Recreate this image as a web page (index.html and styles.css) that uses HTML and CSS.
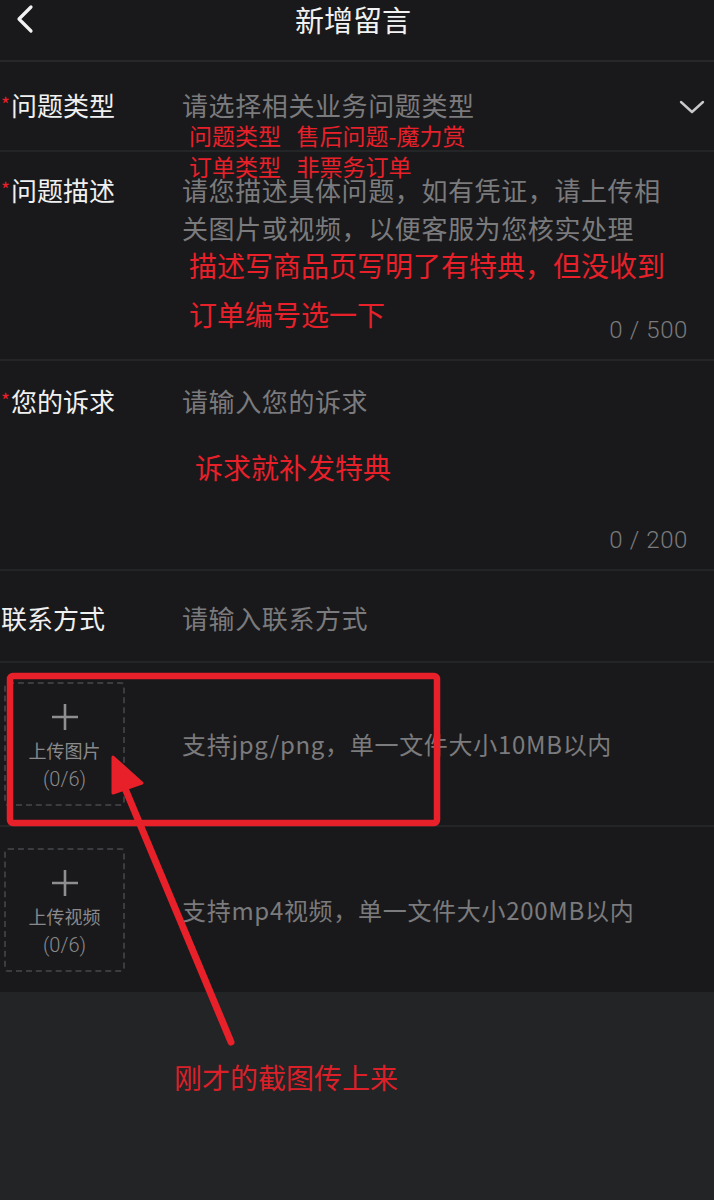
FILE: index.html
```html
<!DOCTYPE html>
<html lang="zh-CN">
<head>
    <meta charset="UTF-8">
    <meta name="viewport" content="width=device-width, initial-scale=1.0">
    <title>新增留言</title>
    <link rel="stylesheet" href="styles.css">
</head>
<body>

<div class="page">

    <!-- 顶部导航 -->
    <div class="header">
        <a class="back-button">
            <svg width="20" height="30" viewBox="0 0 20 30"><path d="M16 3 L4 15 L16 27" fill="none" stroke="#f2f2f2" stroke-width="3.2" stroke-linecap="round" stroke-linejoin="round"/></svg>
        </a>
        <div class="title">新增留言</div>
        <div class="header-space"></div>
    </div>

    <!-- 表单 -->
    <div class="form">
        <div class="row row-type">
            <div class="label"><span class="star">*</span>问题类型</div>
            <div class="field">请选择相关业务问题类型</div>
            <svg class="arrow-down" width="26" height="14" viewBox="0 0 26 14"><path d="M2 2 L13 12 L24 2" fill="none" stroke="#c9c9cb" stroke-width="2.4" stroke-linecap="round" stroke-linejoin="round"/></svg>
        </div>

        <div class="row row-desc">
            <div class="label"><span class="star">*</span>问题描述</div>
            <div class="field field-area">
                <div class="placeholder">请您描述具体问题，如有凭证，请上传相<br>关图片或视频，以便客服为您核实处理</div>
                <div class="counter">0 / 500</div>
            </div>
        </div>

        <div class="row row-ask">
            <div class="label"><span class="star">*</span>您的诉求</div>
            <div class="field field-area">
                <div class="placeholder">请输入您的诉求</div>
                <div class="counter">0 / 200</div>
            </div>
        </div>

        <div class="row row-contact">
            <div class="label">联系方式</div>
            <div class="field">请输入联系方式</div>
        </div>

        <div class="upload-row">
            <div class="upload-box">
                <svg width="30" height="30" viewBox="0 0 30 30"><path d="M15 2 V28 M2 15 H28" stroke="#8e8e90" stroke-width="2.6"/></svg>
                <div>上传图片</div>
                <div class="count">(0/6)</div>
            </div>
            <div class="upload-tip">支持jpg/png，单一文件大小10MB以内</div>
        </div>

        <div class="upload-row upload-last">
            <div class="upload-box">
                <svg width="30" height="30" viewBox="0 0 30 30"><path d="M15 2 V28 M2 15 H28" stroke="#8e8e90" stroke-width="2.6"/></svg>
                <div>上传视频</div>
                <div class="count">(0/6)</div>
            </div>
            <div class="upload-tip">支持mp4视频，单一文件大小200MB以内</div>
        </div>
    </div>

    <!-- 红色批注 -->
    <div class="note note-small note-1">问题类型&nbsp;&nbsp;&nbsp;售后问题-魔力赏</div>
    <div class="note note-small note-2">订单类型&nbsp;&nbsp;&nbsp;非票务订单</div>
    <div class="note note-3">描述写商品页写明了有特典，但没收到</div>
    <div class="note note-4">订单编号选一下</div>
    <div class="note note-5">诉求就补发特典</div>
    <div class="note note-6">刚才的截图传上来</div>

    <svg class="marks" width="714" height="1200" viewBox="0 0 714 1200">
        <rect x="10" y="676" width="427" height="147" rx="3" fill="none" stroke="#e8202a" stroke-width="6.5"/>
        <line x1="231" y1="1042" x2="124" y2="786" stroke="#e8202a" stroke-width="7" stroke-linecap="round"/>
        <polygon points="113,757 142,783 113,793" fill="#e8202a" stroke="#e8202a" stroke-width="3" stroke-linejoin="round"/>
    </svg>
</div>

</body>
</html>
```

FILE: styles.css
```css
body {
    margin: 0;
    background: #222426;
    font-family: "Noto Sans CJK SC", "Noto Sans", sans-serif;
    color: #eeeeee;
}

.page {
    position: relative;
    width: 714px;
    height: 1200px;
    overflow: hidden;
}

/* 顶部导航 */
.header {
    display: flex;
    align-items: flex-start;
    height: 60px;
    background: #19191b;
    border-bottom: 2px solid #27282b;
}

.back-button {
    width: 60px;
    padding: 4px 0 0 15px;
    box-sizing: border-box;
}

.title {
    flex: 1;
    text-align: center;
    font-size: 29px;
    line-height: 36px;
    padding-top: 1px;
    color: #f2f2f2;
    padding-right: 8px;
}

.header-space {
    width: 60px;
}

/* 表单 */
.form {
    background: #19191b;
}

.row {
    display: flex;
    align-items: flex-start;
    border-bottom: 2px solid #242527;
    box-sizing: border-box;
}

.label {
    width: 182px;
    font-size: 26px;
    line-height: 38px;
    color: #f0f0f0;
    padding-left: 1px;
    box-sizing: border-box;
}

.star {
    display: inline-block;
    color: #e8202a;
    font-size: 19px;
    line-height: 20px;
    vertical-align: top;
    margin: 8px 1px 0 0;
}

.field {
    flex: 1;
    font-size: 26px;
    line-height: 38px;
    color: #7b7b7d;
    letter-spacing: 0.6px;
}

.row-type {
    height: 90px;
    padding-top: 24px;
}

.arrow-down {
    margin: 14px 9px 0 0;
}

.row-desc {
    height: 209px;
    padding-top: 19px;
}

.row-ask {
    height: 210px;
    padding-top: 21px;
}

.field-area {
    display: flex;
    flex-direction: column;
    align-self: stretch;
    padding-bottom: 16px;
}

.counter {
    margin-top: auto;
    text-align: right;
    padding-right: 26px;
    font-family: Roboto, "Noto Sans", sans-serif;
    font-weight: 300;
    font-size: 24px;
    line-height: 26px;
    color: #7a7b7d;
    letter-spacing: 0.6px;
}

.row-contact {
    height: 92px;
    padding-top: 28px;
}

.upload-row {
    display: flex;
    align-items: center;
    height: 164px;
    padding-left: 4px;
    border-bottom: 2px solid #242527;
    box-sizing: border-box;
}

.upload-last {
    height: 165px;
    border-bottom: none;
}

.upload-box {
    width: 121px;
    height: 124px;
    border: 2px dashed #3b3c3f;
    border-radius: 4px;
    box-sizing: border-box;
    display: flex;
    flex-direction: column;
    align-items: center;
    padding-top: 18px;
    font-size: 18px;
    line-height: 29px;
    color: #8a8a8c;
}

.upload-box svg {
    margin-bottom: 4px;
}

.upload-box .count {
    font-family: Roboto, "Noto Sans", sans-serif;
    font-weight: 300;
    font-size: 20px;
}

.upload-tip {
    margin-left: 57px;
    font-size: 24px;
    line-height: 32px;
    color: #7b7b7d;
    letter-spacing: 0.7px;
}

/* 红色批注 */
.note {
    position: absolute;
    color: #e8202a;
    font-size: 28px;
    line-height: 36px;
    white-space: nowrap;
}

.note-small {
    font-size: 23px;
    line-height: 30px;
}

.note-1 { left: 189px; top: 120px; }
.note-2 { left: 189px; top: 151px; }
.note-3 { left: 189px; top: 247px; }
.note-4 { left: 189px; top: 296px; }
.note-5 { left: 195px; top: 449px; }
.note-6 { left: 174px; top: 1059px; color: #dc2029; }

.marks {
    position: absolute;
    left: 0;
    top: 0;
    pointer-events: none;
}
```
